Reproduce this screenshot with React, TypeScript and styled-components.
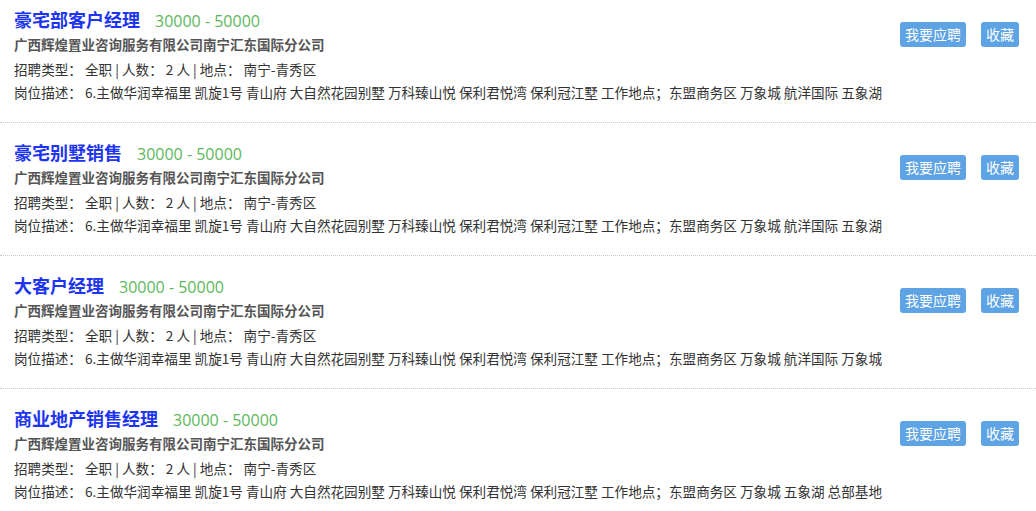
import styled, { createGlobalStyle } from "styled-components";

const GlobalStyle = createGlobalStyle`
  html, body {
    margin: 0;
    padding: 0;
    background: #fff;
  }
  body {
    font-family: "Noto Sans CJK SC", "Noto Sans", sans-serif;
    color: #333;
  }
`;

const List = styled.ul`
  list-style: none;
  margin: 0;
  padding: 0;
  width: 1036px;
`;

const Item = styled.li`
  display: flex;
  justify-content: space-between;
  align-items: flex-start;
  padding: 17px 17px 18px 14px;
  border-bottom: 1px dotted #c8c8c8;

  &:first-child {
    padding-top: 7px;
  }
  &:last-child {
    border-bottom: none;
  }
`;

const Info = styled.div`
  flex: 1;
  min-width: 0;
`;

const TitleRow = styled.div`
  display: flex;
  align-items: baseline;
  height: 24px;
  line-height: 24px;
  white-space: nowrap;
`;

const Title = styled.a`
  font-size: 18px;
  font-weight: bold;
  color: #1d35f0;
  text-decoration: none;
  cursor: pointer;
`;

const Salary = styled.span`
  margin-left: 15px;
  font-family: "Open Sans", "Noto Sans", sans-serif;
  font-size: 16px;
  color: #5cb85c;
`;

const Company = styled.div`
  font-size: 13.5px;
  font-weight: bold;
  color: #555;
  line-height: 26px;
  white-space: nowrap;
`;

const Line = styled.div<{ $h: number }>`
  font-size: 13.6px;
  color: #333;
  line-height: ${(p) => p.$h}px;
  white-space: nowrap;
  overflow: hidden;
`;

const Actions = styled.div`
  display: flex;
  gap: 15px;
  margin-top: 15px;
  flex-shrink: 0;
`;

const Button = styled.button`
  height: 25px;
  padding: 0 5px;
  border: none;
  border-radius: 3px;
  background: #5ea3e3;
  color: #fff;
  font-family: "Noto Sans CJK SC", sans-serif;
  font-size: 14px;
  line-height: 25px;
  cursor: pointer;
`;

const base =
  "6.主做华润幸福里 凯旋1号 青山府 大自然花园别墅 万科臻山悦 保利君悦湾 保利冠江墅 工作地点；东盟商务区 万象城 ";

const jobs = [
  { title: "豪宅部客户经理", tail: "航洋国际 五象湖" },
  { title: "豪宅别墅销售", tail: "航洋国际 五象湖" },
  { title: "大客户经理", tail: "航洋国际 万象城" },
  { title: "商业地产销售经理", tail: "五象湖 总部基地" },
];

export default function App() {
  return (
    <>
      <GlobalStyle />
      <List>
        {jobs.map((job) => (
          <Item key={job.title}>
            <Info>
              <TitleRow>
                <Title>{job.title}</Title>
                <Salary>30000 - 50000</Salary>
              </TitleRow>
              <Company>广西辉煌置业咨询服务有限公司南宁汇东国际分公司</Company>
              <Line $h={24}>招聘类型：&nbsp;全职 | 人数：&nbsp;2 人 | 地点：&nbsp;南宁-青秀区</Line>
              <Line $h={23}>岗位描述：&nbsp;{base + job.tail}</Line>
            </Info>
            <Actions>
              <Button>我要应聘</Button>
              <Button>收藏</Button>
            </Actions>
          </Item>
        ))}
      </List>
    </>
  );
}
